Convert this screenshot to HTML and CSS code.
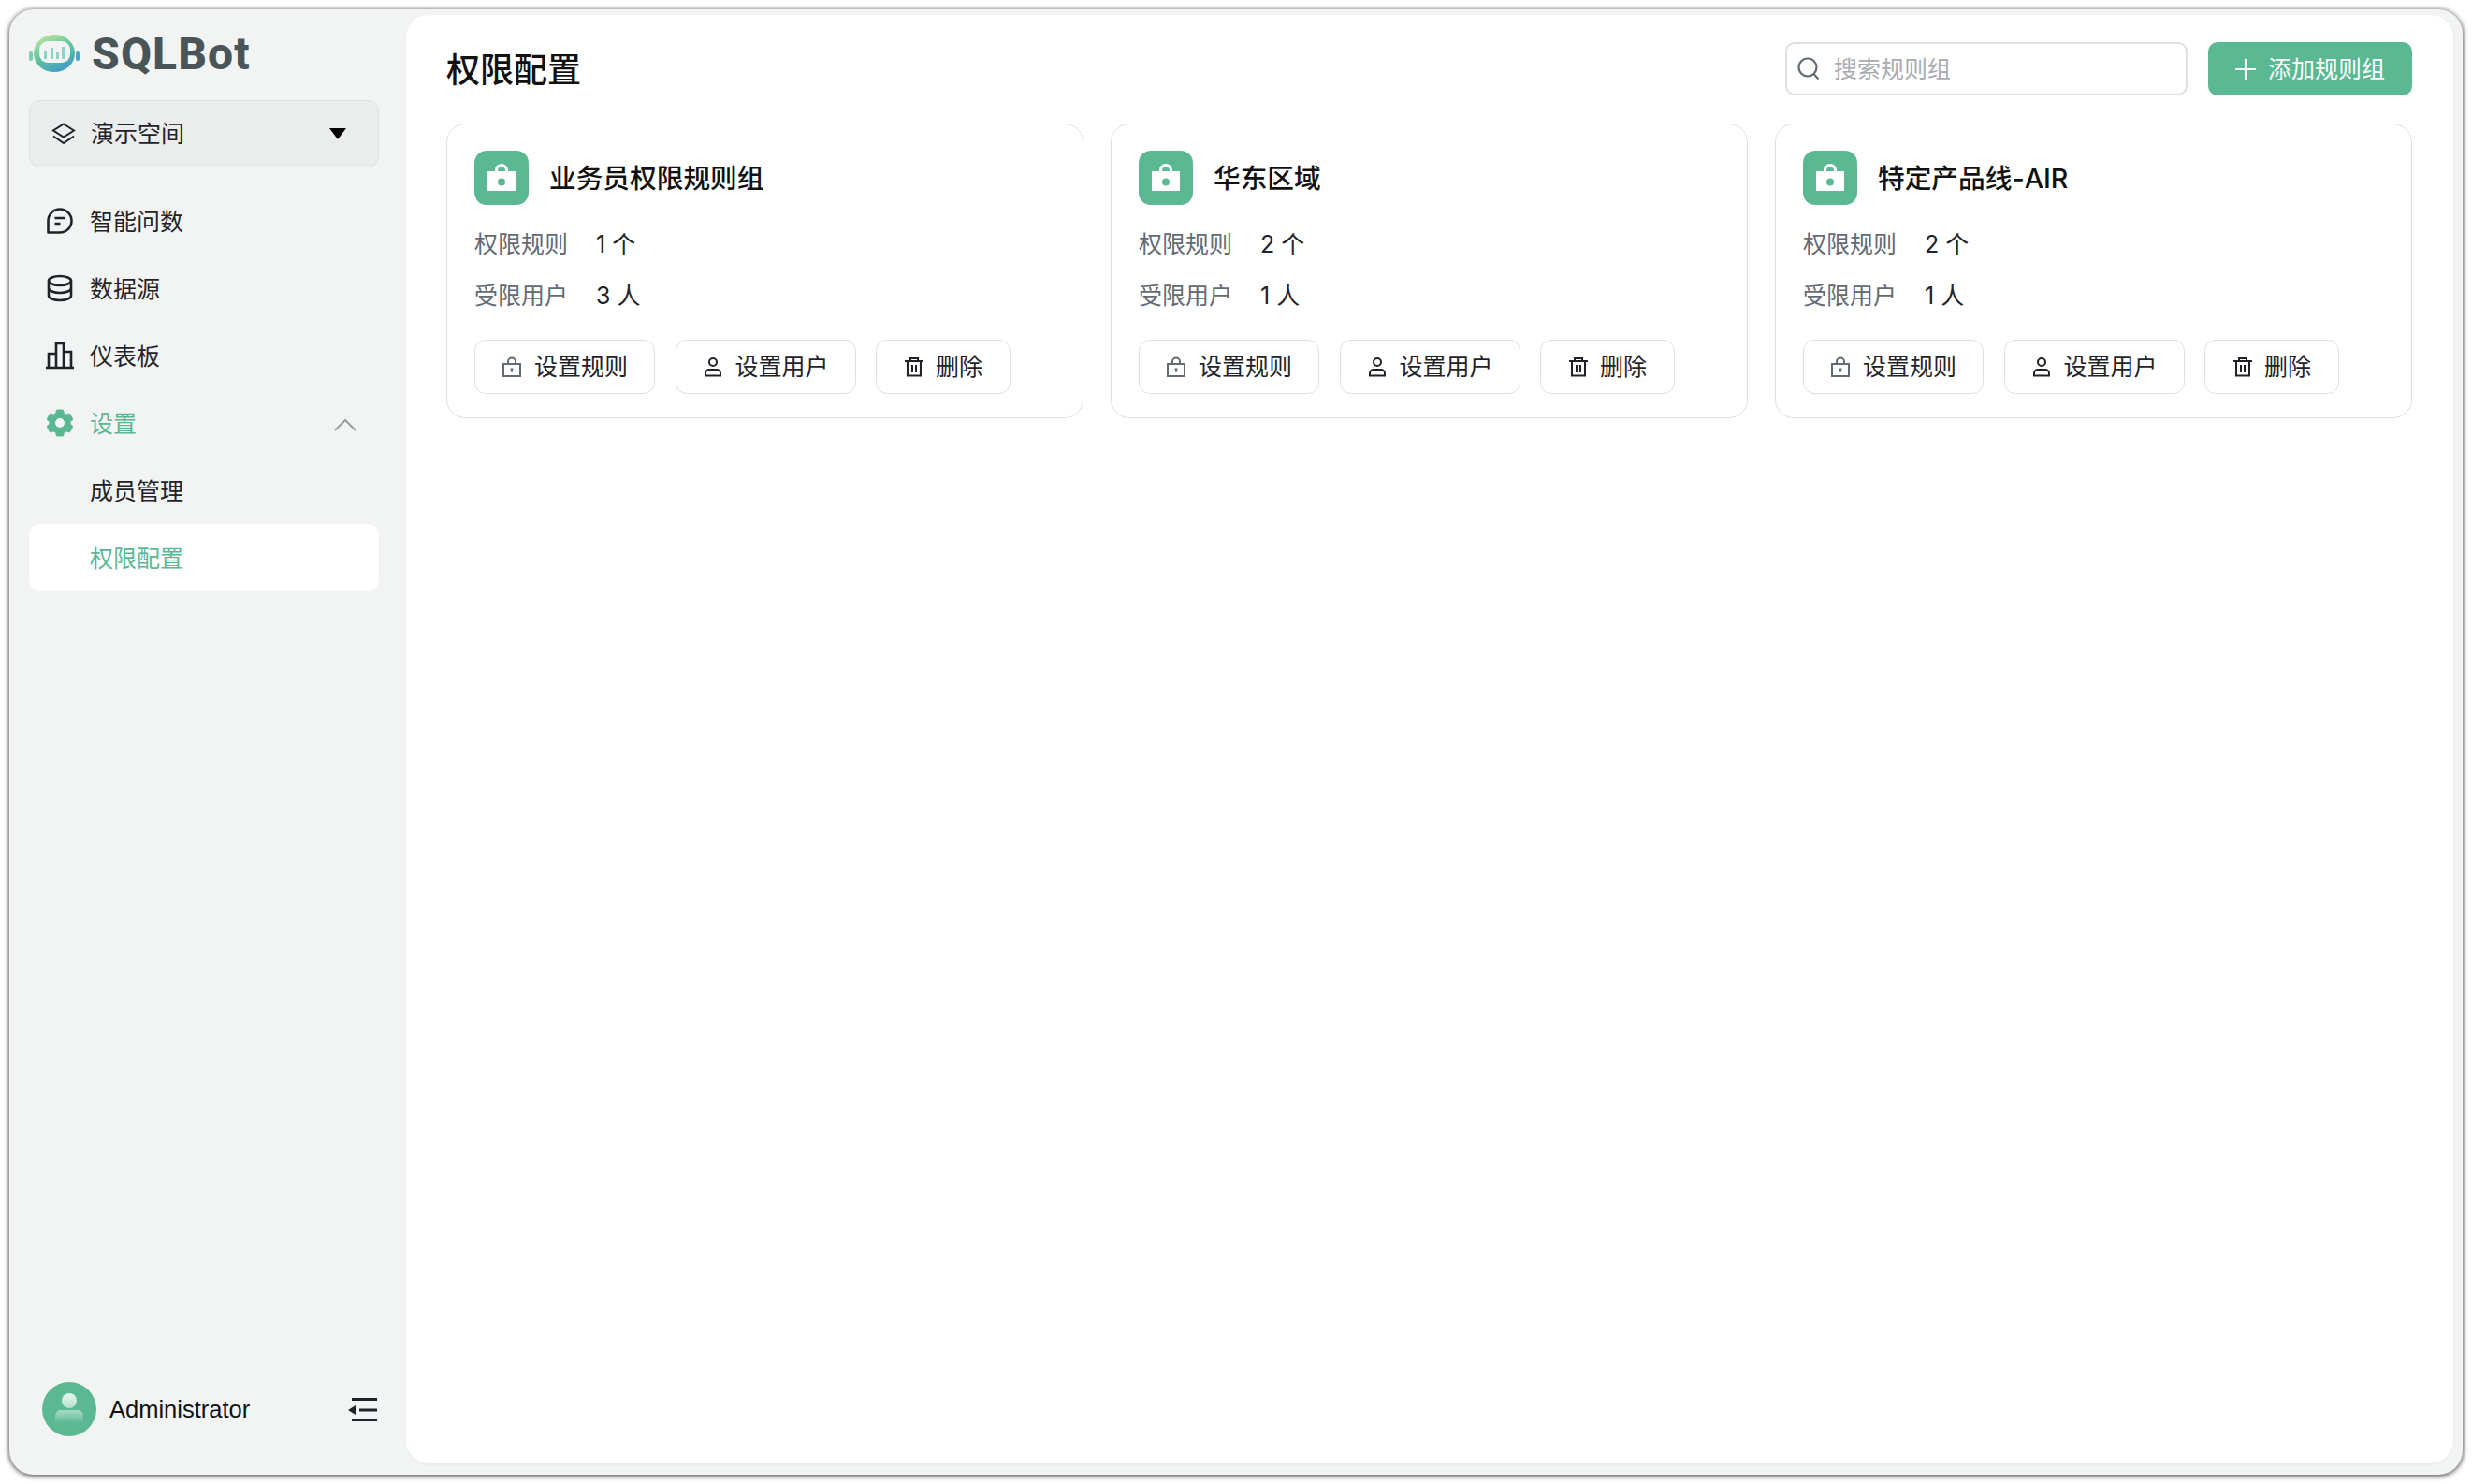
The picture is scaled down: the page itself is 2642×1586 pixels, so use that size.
FILE: index.html
```html
<!DOCTYPE html>
<html lang="zh-CN">
<head>
<meta charset="utf-8">
<title>SQLBot 权限配置</title>
<link rel="stylesheet" href="styles.css">
</head>
<body>
<svg class="sprite" xmlns="http://www.w3.org/2000/svg">
  <symbol id="i-group" viewBox="0 0 58 58">
    <path fill="#fff" d="M29 14c-4 0-7 3-7 7v1h-7c-.6 0-1 .4-1 1v19c0 .6.4 1 1 1h28c.6 0 1-.4 1-1V23c0-.6-.4-1-1-1h-7v-1c0-4-3-7-7-7zm0 3c2.200 0 4 1.800 4 4v1h-8v-1c0-2.200 1.800-4 4-4z"/>
    <circle cx="29" cy="33.500" r="4" fill="#5ab893"/>
  </symbol>
  <symbol id="i-lock" viewBox="0 0 22 22">
    <path fill="none" stroke="#646a73" stroke-width="2" d="M2 8h18v13H2zM7 8V5.500a4 4 0 0 1 8 0V8"/>
    <path fill="#646a73" d="M9.500 12.500h3v1.500l-.8.700V17h-1.400v-2.300l-.8-.7z"/>
  </symbol>
  <symbol id="i-user" viewBox="0 0 22 22">
    <circle cx="11" cy="6" r="4" fill="none" stroke="#1f2329" stroke-width="2"/>
    <path fill="none" stroke="#1f2329" stroke-width="2" d="M3 20.500v-2.500a4 4 0 0 1 4-4h8a4 4 0 0 1 4 4v2.500z"/>
  </symbol>
  <symbol id="i-trash" viewBox="0 0 22 22">
    <path fill="none" stroke="#1f2329" stroke-width="2" d="M1 5h20M7 5V2h8v3M4 5v15.500h14V5M9 9v8M13 9v8"/>
  </symbol>
</svg>
<div class="window">
  <aside class="sidebar">
    <div class="brand">
      <svg class="brand-mark" width="54" height="42" viewBox="0 0 54 42">
        <defs>
          <linearGradient id="logo-grad" x1="0.3" y1="0" x2="0.8" y2="1">
            <stop offset="0" stop-color="#b2e59c"/>
            <stop offset="0.5" stop-color="#5cc0a0"/>
            <stop offset="1" stop-color="#3e97cf"/>
          </linearGradient>
        </defs>
        <rect x="0" y="19" width="4" height="10" rx="2" fill="#79d0ae"/>
        <rect x="50" y="19" width="4" height="10" rx="2" fill="#4aa5c8"/>
        <ellipse cx="27" cy="21" rx="22" ry="20" fill="url(#logo-grad)"/>
        <rect x="11" y="8" width="33" height="23" rx="9" fill="#f2f4f3"/>
        <g fill="#8dd4c8">
          <rect x="16" y="18" width="3" height="9"/>
          <rect x="23" y="15" width="3" height="12"/>
          <rect x="29" y="20" width="3" height="7"/>
          <rect x="35" y="14" width="3" height="13"/>
        </g>
      </svg>
      <span class="brand-name">SQLBot</span>
    </div>
    <div class="workspace">
      <svg class="workspace-icon" width="26" height="24" viewBox="0 0 26 24" fill="none" stroke="#1f2329" stroke-width="2">
        <path d="M13 1.500 24 8.500 13 15.500 2 8.500z"/>
        <path d="M2 14.500 13 22 24 14.500"/>
      </svg>
      <span class="workspace-name">演示空间</span>
      <span class="caret"></span>
    </div>
    <nav class="nav">
      <a class="nav-item">
        <svg class="nav-icon" width="30" height="30" viewBox="0 0 30 30" fill="none" stroke="#1f2329" stroke-width="2.600">
          <path d="M15 2.500a12.500 12.500 0 0 1 0 25H2.500V15A12.500 12.500 0 0 1 15 2.500z" stroke-linejoin="round"/>
          <path d="M9.500 12h11M9.500 18h6"/>
        </svg>
        <span class="nav-text">智能问数</span>
      </a>
      <a class="nav-item">
        <svg class="nav-icon" width="30" height="30" viewBox="0 0 30 30" fill="none" stroke="#1f2329" stroke-width="2.600">
          <ellipse cx="15" cy="7" rx="12" ry="5"/>
          <path d="M3 7v16c0 2.800 5.400 5 12 5s12-2.200 12-5V7M3 15c0 2.800 5.400 5 12 5s12-2.200 12-5"/>
        </svg>
        <span class="nav-text">数据源</span>
      </a>
      <a class="nav-item">
        <svg class="nav-icon" width="30" height="30" viewBox="0 0 30 30" fill="none" stroke="#1f2329" stroke-width="2.600">
          <path d="M0 28h30M3 28V13h8v15M11 28V2h8v26M19 28V11h8v17"/>
        </svg>
        <span class="nav-text">仪表板</span>
      </a>
      <a class="nav-item is-accent">
        <svg class="nav-icon" width="30" height="30" viewBox="0 0 30 30" fill="#5ab893">
          <circle cx="15" cy="15" r="8.300" fill="none" stroke="#5ab893" stroke-width="6.600"/>
          <g>
            <rect x="10.500" y="0.500" width="9" height="7" rx="2.500"/>
            <rect x="10.500" y="0.500" width="9" height="7" rx="2.500" transform="rotate(60 15 15)"/>
            <rect x="10.500" y="0.500" width="9" height="7" rx="2.500" transform="rotate(120 15 15)"/>
            <rect x="10.500" y="0.500" width="9" height="7" rx="2.500" transform="rotate(180 15 15)"/>
            <rect x="10.500" y="0.500" width="9" height="7" rx="2.500" transform="rotate(240 15 15)"/>
            <rect x="10.500" y="0.500" width="9" height="7" rx="2.500" transform="rotate(300 15 15)"/>
          </g>
        </svg>
        <span class="nav-text">设置</span>
        <svg class="chevron" width="24" height="14" viewBox="0 0 24 14" fill="none" stroke="#9a9da3" stroke-width="2">
          <path d="M1 13 12 2l11 11"/>
        </svg>
      </a>
      <a class="nav-item nav-sub">
        <span class="nav-text">成员管理</span>
      </a>
      <a class="nav-item nav-sub is-accent is-active">
        <span class="nav-text">权限配置</span>
      </a>
    </nav>
    <div class="account">
      <svg class="avatar" width="58" height="58" viewBox="0 0 58 58">
        <defs>
          <linearGradient id="ava-head" x1="0" y1="0" x2="0" y2="1">
            <stop offset="0" stop-color="#e9f6f1"/>
            <stop offset="1" stop-color="#b5e0cf"/>
          </linearGradient>
          <linearGradient id="ava-body" x1="0" y1="0" x2="0" y2="1">
            <stop offset="0" stop-color="#a9dac7"/>
            <stop offset="1" stop-color="#5ab893"/>
          </linearGradient>
        </defs>
        <circle cx="29" cy="29" r="29" fill="#5ab893"/>
        <circle cx="29" cy="20" r="8" fill="url(#ava-head)"/>
        <path d="M14 44v-8c0-3.300 2.700-6 6-6h18c3.300 0 6 2.700 6 6v8z" fill="url(#ava-body)"/>
      </svg>
      <span class="account-name">Administrator</span>
      <svg class="collapse" width="31" height="27" viewBox="0 0 31 27" fill="#1f2329">
        <rect x="4" y="0" width="27" height="3"/>
        <rect x="12" y="11.500" width="19" height="3"/>
        <rect x="4" y="22" width="27" height="3"/>
        <path d="M0 13 8 8v10z"/>
      </svg>
    </div>
  </aside>
  <main class="main">
    <header class="page-head">
      <h1 class="page-title">权限配置</h1>
      <div class="page-tools">
        <label class="search">
          <svg width="24" height="26" viewBox="0 0 24 26" fill="none" stroke="#646a73" stroke-width="2.200">
            <circle cx="11" cy="11" r="9.500"/>
            <path d="m17.500 18 5 5.500"/>
          </svg>
          <span class="search-hint">搜索规则组</span>
        </label>
        <button class="add-btn">
          <svg width="22" height="22" viewBox="0 0 22 22" stroke="#fff" stroke-width="2.200"><path d="M11 0v22M0 11h22"/></svg>
          <span class="add-text">添加规则组</span>
        </button>
      </div>
    </header>
    <section class="cards">
      <article class="card">
        <div class="card-head">
          <svg class="card-icon"><use href="#i-group"/></svg>
          <h2 class="card-title">业务员权限规则组</h2>
        </div>
        <div class="stat"><span class="stat-label">权限规则</span><span class="stat-value">1 个</span></div>
        <div class="stat"><span class="stat-label">受限用户</span><span class="stat-value">3 人</span></div>
        <div class="actions">
          <button class="act"><svg class="act-icon"><use href="#i-lock"/></svg><span class="act-text">设置规则</span></button>
          <button class="act"><svg class="act-icon"><use href="#i-user"/></svg><span class="act-text">设置用户</span></button>
          <button class="act act-del"><svg class="act-icon"><use href="#i-trash"/></svg><span class="act-text">删除</span></button>
        </div>
      </article>
      <article class="card">
        <div class="card-head">
          <svg class="card-icon"><use href="#i-group"/></svg>
          <h2 class="card-title">华东区域</h2>
        </div>
        <div class="stat"><span class="stat-label">权限规则</span><span class="stat-value">2 个</span></div>
        <div class="stat"><span class="stat-label">受限用户</span><span class="stat-value">1 人</span></div>
        <div class="actions">
          <button class="act"><svg class="act-icon"><use href="#i-lock"/></svg><span class="act-text">设置规则</span></button>
          <button class="act"><svg class="act-icon"><use href="#i-user"/></svg><span class="act-text">设置用户</span></button>
          <button class="act act-del"><svg class="act-icon"><use href="#i-trash"/></svg><span class="act-text">删除</span></button>
        </div>
      </article>
      <article class="card">
        <div class="card-head">
          <svg class="card-icon"><use href="#i-group"/></svg>
          <h2 class="card-title">特定产品线-AIR</h2>
        </div>
        <div class="stat"><span class="stat-label">权限规则</span><span class="stat-value">2 个</span></div>
        <div class="stat"><span class="stat-label">受限用户</span><span class="stat-value">1 人</span></div>
        <div class="actions">
          <button class="act"><svg class="act-icon"><use href="#i-lock"/></svg><span class="act-text">设置规则</span></button>
          <button class="act"><svg class="act-icon"><use href="#i-user"/></svg><span class="act-text">设置用户</span></button>
          <button class="act act-del"><svg class="act-icon"><use href="#i-trash"/></svg><span class="act-text">删除</span></button>
        </div>
      </article>
    </section>
  </main>
</div>
</body>
</html>
```

FILE: styles.css
```css
* { box-sizing: border-box; }

html, body { margin: 0; height: 100%; }

body {
  background: #fff;
  font-family: Inter, "Noto Sans CJK SC", sans-serif;
  font-size: 25px;
  color: #1f2329;
  overflow: hidden;
}

.sprite { display: none; }

.window {
  margin: 10px;
  height: 1566px;
  display: flex;
  background: #f2f4f3;
  border-radius: 26px;
  box-shadow: 0 1px 5px 1px rgba(0, 0, 0, 0.62);
}

.sidebar {
  width: 424px;
  flex: none;
  display: flex;
  flex-direction: column;
  padding: 0 29px 41px 21px;
}

.brand {
  height: 50px;
  margin-top: 22px;
  display: flex;
  align-items: center;
  gap: 13px;
}

.brand-mark { flex: none; }

.brand-name {
  font-family: Roboto, sans-serif;
  font-size: 48px;
  font-weight: 800;
  color: #4a5558;
  letter-spacing: 1.100px;
}

.workspace {
  margin-top: 25px;
  height: 72px;
  display: flex;
  align-items: center;
  padding: 0 34px 0 23px;
  background: #ebeded;
  border: 1px solid #dfe1e2;
  border-radius: 12px;
}

.nav-text,
.search-hint,
.add-text,
.stat-label,
.stat-value,
.card-title,
.page-title {
  margin-bottom: 3px;
}

.act-text { margin-bottom: 5px; }

.workspace-name { margin: 0 0 5px 16px; flex: 1; }

.caret {
  width: 0;
  height: 0;
  border-left: 9px solid transparent;
  border-right: 9px solid transparent;
  border-top: 12px solid #000;
}

.nav {
  margin-top: 21px;
  display: flex;
  flex-direction: column;
}

.nav-item {
  height: 72px;
  display: flex;
  align-items: center;
  gap: 17px;
  padding: 0 24px 0 18px;
  border-radius: 12px;
}

.nav-icon { flex: none; }

.nav-sub { padding-left: 65px; }

.is-accent { color: #5ab893; }

.is-active { background: #fff; }

.chevron { margin-left: auto; margin-top: 4px; }

.account {
  margin-top: auto;
  padding-left: 14px;
  display: flex;
  align-items: center;
  gap: 14px;
}

.avatar { flex: none; }

.account-name {
  font-family: "Liberation Sans", sans-serif;
  font-size: 25.500px;
  color: #111;
  flex: 1;
}

.collapse { flex: none; margin-right: 2px; margin-top: 2px; }

.main {
  flex: 1;
  min-width: 0;
  margin: 6px 10px 12px 0;
  padding: 29px 44px 0 43px;
  background: #fff;
  border-radius: 24px;
  box-shadow: 0 1px 3px rgba(0, 0, 0, 0.06);
}

.page-head {
  height: 57px;
  display: flex;
  align-items: center;
  justify-content: space-between;
  margin-bottom: 30px;
}

.page-title {
  margin-top: 0;
  font-size: 36px;
  font-weight: 500;
  color: #111;
}

.page-tools {
  display: flex;
  gap: 22px;
}

.search {
  width: 430px;
  height: 57px;
  display: flex;
  align-items: center;
  gap: 15px;
  padding: 0 11px;
  border: 2px solid #dee0e3;
  border-radius: 10px;
}

.search-hint { color: #a8abb2; }

.add-btn {
  width: 218px;
  height: 57px;
  display: flex;
  align-items: center;
  justify-content: center;
  gap: 13px;
  border: 0;
  border-radius: 10px;
  background: #5ab893;
  color: #fff;
  font: inherit;
}

.cards {
  display: grid;
  grid-template-columns: repeat(3, 1fr);
  gap: 29px;
  align-items: start;
}

.card {
  height: 315px;
  padding: 28px 29px;
  border: 1px solid #dee0e3;
  border-radius: 20px;
}

.card-head {
  height: 58px;
  display: flex;
  align-items: center;
  gap: 22px;
  margin-bottom: 24px;
}

.card-icon {
  width: 58px;
  height: 58px;
  flex: none;
  background: #5ab893;
  border-radius: 13px;
}

.card-title {
  margin-top: 0;
  font-size: 28.700px;
  font-weight: 500;
  color: #111;
}

.stat {
  height: 34px;
  display: flex;
  align-items: center;
  gap: 30px;
  color: #1f2329;
}

.stat + .stat { margin-top: 21px; }

.stat-label { color: #646a73; }

.actions {
  margin-top: 31px;
  display: flex;
  gap: 21.500px;
}

.act {
  height: 58px;
  display: flex;
  align-items: center;
  gap: 13px;
  padding: 0 28px;
  background: #fff;
  border: 1px solid #dee0e3;
  border-radius: 12px;
  font: inherit;
  color: #1f2329;
}

.act-del {
  gap: 12px;
  padding: 0 29px;
}

.act-icon { width: 22px; height: 22px; flex: none; }
```
